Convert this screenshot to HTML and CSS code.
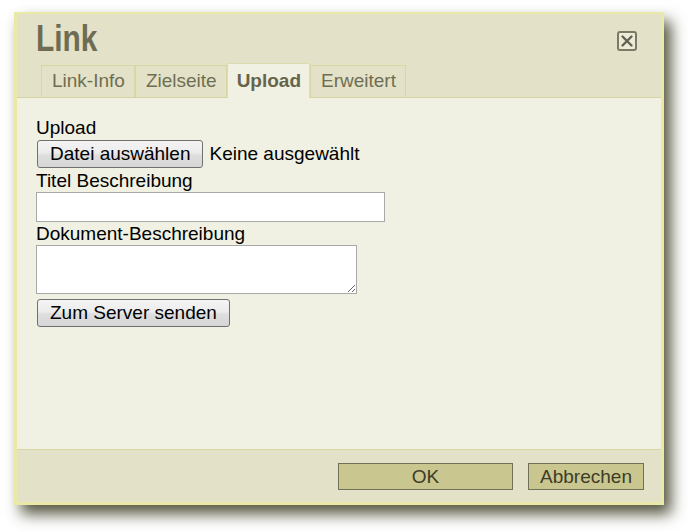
FILE: index.html
```html
<!DOCTYPE html>
<html lang="de">
<head>
<meta charset="utf-8">
<title>Link</title>
<link rel="stylesheet" href="styles.css">
</head>
<body>
<div class="page">
  <div class="dialog">
    <div class="header">
      <div class="title-row">
        <h1 class="title">Link</h1>
        <span class="close" title="Schließen">
          <svg width="20" height="20" viewBox="0 0 20 20"><rect x="1" y="1" width="18" height="18" rx="2" fill="#ecebd8" stroke="#7a7a66" stroke-width="2"/><path d="M5.5 5.5L14.5 14.5M14.5 5.5L5.5 14.5" stroke="#626254" stroke-width="2.4" stroke-linecap="round"/></svg>
        </span>
      </div>
      <div class="tabs">
        <span class="tab">Link-Info</span>
        <span class="tab">Zielseite</span>
        <span class="tab active">Upload</span>
        <span class="tab">Erweitert</span>
      </div>
    </div>
    <div class="content">
      <div class="lbl">Upload</div>
      <div class="filerow">
        <button class="btn" type="button">Datei auswählen</button>
        <span class="filename">Keine ausgewählt</span>
      </div>
      <div class="lbl lbl-gap">Titel Beschreibung</div>
      <input class="field" type="text">
      <div class="lbl lbl-gap2">Dokument-Beschreibung</div>
      <textarea class="area"></textarea>
      <button class="btn send" type="button">Zum Server senden</button>
    </div>
    <div class="footer">
      <button class="fbtn ok" type="button">OK</button>
      <button class="fbtn cancel" type="button">Abbrechen</button>
    </div>
  </div>
</div>
</body>
</html>
```

FILE: styles.css
```css
html, body {
  margin: 0;
  padding: 0;
  background: #ffffff;
}
body {
  font-family: "Liberation Sans", Arial, sans-serif;
  font-size: 19px;
  color: #000;
}
.page {
  padding: 12px 0 27px 14px;
}
.dialog {
  box-sizing: border-box;
  width: 650px;
  height: 493px;
  display: flex;
  flex-direction: column;
  border-style: solid;
  border-color: #ebe9a7;
  border-width: 2px 3px 3px 3px;
  background: #e3e2c8;
  box-shadow: 7px 9px 14px rgba(55, 55, 30, 0.85);
}
.header {
  background: #e3e2c8;
  padding-top: 5px;
}
.title-row {
  display: flex;
  align-items: center;
  justify-content: space-between;
  padding: 0 24px 0 19px;
}
.title {
  margin: 0;
  font-family: "Liberation Sans", Arial, sans-serif;
  font-size: 36px;
  font-weight: bold;
  line-height: 40px;
  color: #6e6c52;
  transform: scaleX(0.83);
  transform-origin: left center;
}
.close {
  display: block;
  width: 20px;
  height: 20px;
  margin-top: 4px;
}
.close svg {
  display: block;
}
.tabs {
  display: flex;
  align-items: flex-end;
  margin-top: 4px;
  padding-left: 24px;
  border-bottom: 1px solid #d6d5a2;
  height: 34px;
}
.tab {
  box-sizing: border-box;
  height: 32px;
  padding: 4px 9px 0 10px;
  line-height: 22px;
  border: 1px solid #d8d7a4;
  border-bottom: none;
  color: #6f6e52;
  background: #e3e2c8;
}
.tab.active {
  height: 35px;
  margin-bottom: -1px;
  padding-top: 6px;
  padding-left: 9px;
  padding-right: 8px;
  font-weight: bold;
  color: #66654a;
  background: #f0f0e3;
  border-color: #dddcae;
}
.content {
  flex: 1;
  background: #f0f0e3;
  padding: 19px 19px 0 19px;
  border-bottom: 1px solid #d8d7a0;
}
.lbl {
  line-height: 22px;
}
.lbl-gap {
  margin-top: 2px;
}
.lbl-gap2 {
  margin-top: 1px;
}
.filerow {
  display: flex;
  align-items: center;
  gap: 6px;
  margin-top: 1px;
}
.filename {
  line-height: 22px;
}
.btn {
  box-sizing: border-box;
  height: 28px;
  margin: 0 0 0 1px;
  padding: 0 12px;
  font-family: inherit;
  font-size: 19px;
  line-height: 22px;
  color: #000;
  border: 1px solid #707070;
  border-radius: 3px;
  background: linear-gradient(#f4f4f4 0%, #ececec 45%, #dedede 55%, #d6d6d6 100%);
}
.field {
  display: block;
  box-sizing: border-box;
  width: 349px;
  height: 30px;
  margin: 0;
  border: 1px solid #a9a9a9;
  background: #fff;
  font-family: inherit;
  font-size: 19px;
}
.area {
  display: block;
  box-sizing: border-box;
  width: 321px;
  height: 49px;
  margin: 0;
  border: 1px solid #a9a9a9;
  background: #fff;
  font-family: inherit;
  font-size: 19px;
}
.send {
  display: block;
  margin-top: 5px;
}
.footer {
  height: 52px;
  box-sizing: border-box;
  display: flex;
  justify-content: flex-end;
  align-items: flex-start;
  gap: 15px;
  padding: 13px 17px 0 0;
  background: #e3e2c8;
}
.fbtn {
  box-sizing: border-box;
  height: 27px;
  margin: 0;
  padding: 0 11px;
  font-family: inherit;
  font-size: 19px;
  line-height: 22px;
  color: #3d3c28;
  background: #c9c78f;
  border: 1px solid #727059;
  border-radius: 0;
}
.fbtn.ok {
  width: 175px;
}
.fbtn.cancel {
  width: 116px;
}
```
